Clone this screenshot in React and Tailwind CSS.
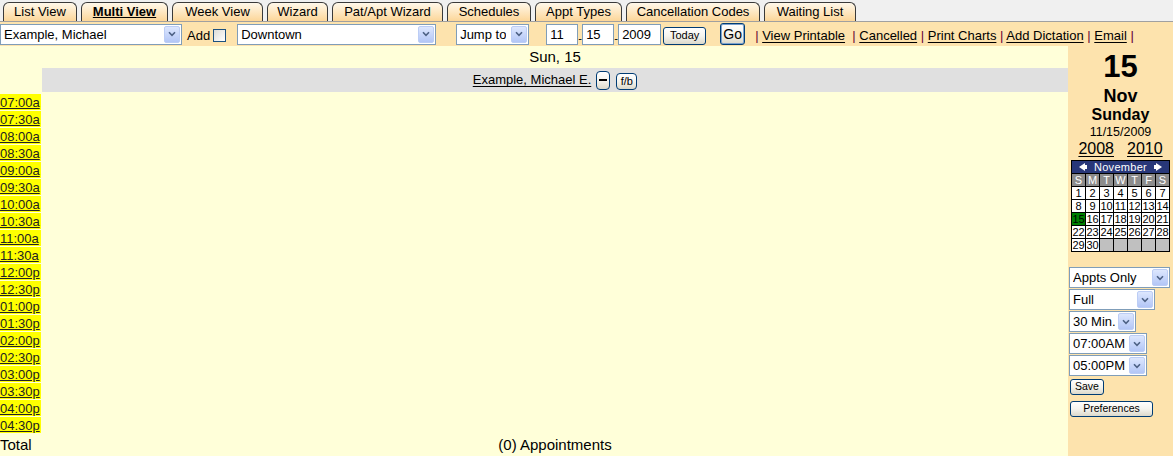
import React from 'react'

const tabs = [
  ['List View', 'w-[74px]'],
  ['Multi View', 'w-[87px]'],
  ['Week View', 'w-[91px]'],
  ['Wizard', 'w-[61px]'],
  ['Pat/Apt Wizard', 'w-[111px]'],
  ['Schedules', 'w-[84px]'],
  ['Appt Types', 'w-[87px]'],
  ['Cancellation Codes', 'w-[134px]'],
  ['Waiting List', 'w-[92px]'],
]

const times = [
  '07:00a', '07:30a', '08:00a', '08:30a', '09:00a', '09:30a', '10:00a', '10:30a',
  '11:00a', '11:30a', '12:00p', '12:30p', '01:00p', '01:30p', '02:00p', '02:30p',
  '03:00p', '03:30p', '04:00p', '04:30p',
]

function Chevron() {
  return (
    <svg width="8" height="6" viewBox="0 0 8 6" aria-hidden="true">
      <path d="M1 1.3 4 4.3 7 1.3" fill="none" stroke="#4d6185" strokeWidth="1.6" />
    </svg>
  )
}

// XP-looking dropdown, drawn by hand so its size is exact
function Select({ className, children }) {
  return (
    <div className={`flex h-[21px] items-center justify-between border border-[#7f9db9] bg-white pl-[3px] pr-px text-[13px] ${className}`}>
      <span className="truncate leading-[19px]">{children}</span>
      <span className="flex h-[17px] w-[16px] shrink-0 items-center justify-center rounded-[2px] border border-[#bccdf5] bg-gradient-to-b from-[#dde7fe] to-[#b3c6f6]">
        <Chevron />
      </span>
    </div>
  )
}

function Input({ className, children }) {
  return (
    <div className={`h-[21px] border border-[#7f9db9] bg-white pl-[3px] text-[13px] leading-[19px] ${className}`}>
      {children}
    </div>
  )
}

function Button({ className, children }) {
  return (
    <div className={`flex items-center justify-center rounded-[3px] border border-[#003c74] bg-gradient-to-b from-white via-[#f5f4ee] to-[#dcd9cb] ${className}`}>
      {children}
    </div>
  )
}

function Link({ children }) {
  return <a className="cursor-pointer text-black underline underline-offset-2">{children}</a>
}

const Pipe = () => <span className="text-[#660033]">|</span>

function Calendar() {
  const days = Array.from({ length: 30 }, (_, i) => i + 1)
  const cells = [...days, null, null, null, null, null]
  return (
    <div className="grid w-[99px] grid-cols-[repeat(7,13px)] gap-px bg-black p-px font-['Liberation_Sans',sans-serif] text-[11px] leading-[12px]">
      <div className="col-span-7 flex h-[12px] items-center justify-between bg-[#283779] px-[7px] text-white">
        <svg width="8" height="8" viewBox="0 0 8 8" aria-hidden="true">
          <path d="M0 4 6 0v8z" fill="white" />
          <rect x="6" y="2" width="2" height="4" fill="white" />
        </svg>
        <span className="text-[11px] tracking-[0.3px]">November</span>
        <svg width="8" height="8" viewBox="0 0 8 8" aria-hidden="true">
          <path d="M8 4 2 0v8z" fill="white" />
          <rect x="0" y="2" width="2" height="4" fill="white" />
        </svg>
      </div>
      {['S', 'M', 'T', 'W', 'T', 'F', 'S'].map((d, i) => (
        <div key={i} className="h-[12px] bg-[#8c8c8c] text-center text-white">{d}</div>
      ))}
      {cells.map((d, i) => (
        <div
          key={i}
          className={`h-[12px] text-center ${d === null ? 'bg-[#c0c0c0]' : d === 15 ? 'bg-[#008000] text-black' : 'bg-white text-black'}`}
        >
          {d}
        </div>
      ))}
    </div>
  )
}

export default function App() {
  return (
    <div className="h-[456px] w-[1173px] overflow-hidden font-['Liberation_Sans',Arial,sans-serif] text-black">
      {/* tabs */}
      <div className="flex h-[22px] items-end gap-[4px] border-b border-[#a0a0a0] bg-[#f0f0f0] pl-[3px]">
        {tabs.map(([name, w]) => (
          <div
            key={name}
            className={`h-[19px] ${w} rounded-t-[6px] border border-b-0 border-[#3a3a3a] bg-gradient-to-b from-[#fff8ea] to-[#fcd698] text-center text-[13px] leading-[18px] ${name === 'Multi View' ? 'font-bold underline' : ''}`}
          >
            {name}
          </div>
        ))}
      </div>

      {/* toolbar */}
      <div className="flex h-[24px] items-center bg-[#fde3ad] text-[13px]">
        <Select className="w-[182px]">Example, Michael</Select>
        <span className="ml-[5px] mt-[3px]">Add</span>
        <span className="ml-[3px] mt-[2px] h-[13px] w-[13px] border border-[#1c5180] bg-gradient-to-br from-[#dcdcd7] to-white" />
        <Select className="ml-[11px] w-[199px]">Downtown</Select>
        <Select className="ml-[20px] w-[73px]">Jump to</Select>
        <Input className="ml-[17px] w-[32px]">11</Input>
        <span className="w-[4px] self-end pb-[2px] text-[11px] leading-[11px]">-</span>
        <Input className="w-[32px]">15</Input>
        <span className="w-[4px] self-end pb-[2px] text-[11px] leading-[11px]">-</span>
        <Input className="w-[43px]">2009</Input>
        <Button className="ml-[2px] mt-[3px] h-[18px] w-[43px] text-[11px]">Today</Button>
        <Button className="ml-[14px] h-[22px] w-[25px] border-[#003c74] text-[14px] shadow-[inset_0_0_0_1px_#7da2ce]">Go</Button>
        <span className="ml-[10px] mt-[3px] whitespace-pre">
          <Pipe /> <Link>View Printable</Link>{'  '}<Pipe /> <Link>Cancelled</Link> <Pipe /> <Link>Print Charts</Link>{' '}
          <Pipe /> <Link>Add Dictation</Link> <Pipe /> <Link>Email</Link> <Pipe />
        </span>
      </div>

      <div className="flex h-[410px]">
        {/* schedule grid */}
        <div className="grid w-[1068px] grid-cols-[42px_1fr] content-start bg-[#ffffd9] text-[13px]">
          <div />
          <div className="h-[22px] text-center text-[15px] leading-[22px]">Sun, 15</div>
          <div />
          <div className="flex h-[24px] items-center justify-center bg-[#e0e0e0]">
            <Link>Example, Michael E.</Link>
            <Button className="ml-[5px] h-[19px] w-[14px] rounded-[4px] border-[#1c3f6e]">
              <span className="h-[1.5px] w-[8px] bg-black" />
            </Button>
            <Button className="ml-[6px] mt-[2px] h-[17px] w-[21px] rounded-[4px] border-[#1c3f6e] text-[11px]">f/b</Button>
          </div>
          <div className="col-span-2 h-[2px]" />
          {times.map((t) => (
            <React.Fragment key={t}>
              <div className="h-[17px] pb-px">
                <a className="block h-[16px] w-[41px] bg-[#ffff00] leading-[17px] text-[#222] underline">{t}</a>
              </div>
              <div />
            </React.Fragment>
          ))}
          <div className="h-[22px] whitespace-nowrap text-[15px] leading-[22px]">Total</div>
          <div className="h-[22px] text-center text-[15px] leading-[22px]">(0) Appointments</div>
        </div>

        {/* side panel */}
        <div className="flex w-[105px] flex-col bg-[#fde3ad]">
          <div className="flex flex-col items-center">
            <div className="mt-[4px] text-[31px] font-bold leading-[34px]">15</div>
            <div className="mt-[2px] text-[18px] font-bold leading-[20px]">Nov</div>
            <div className="text-[16px] font-bold leading-[18px]">Sunday</div>
            <div className="mt-px text-[12.5px] leading-[15px]">11/15/2009</div>
            <div className="flex gap-[13px] text-[16px] leading-[17px]">
              <Link>2008</Link>
              <Link>2010</Link>
            </div>
            <div className="mt-[3px]">
              <Calendar />
            </div>
          </div>
          <div className="mt-[15px] flex flex-col items-start gap-px pl-px">
            <Select className="w-[101px]">Appts Only</Select>
            <Select className="w-[86px]">Full</Select>
            <Select className="w-[67px]">30 Min.</Select>
            <Select className="w-[78px]">07:00AM</Select>
            <Select className="w-[78px]">05:00PM</Select>
            <Button className="ml-px mt-[2px] h-[16px] w-[34px] text-[10.5px]">Save</Button>
            <Button className="ml-px mt-[5px] h-[16px] w-[83px] text-[10.5px]">Preferences</Button>
          </div>
        </div>
      </div>
    </div>
  )
}
